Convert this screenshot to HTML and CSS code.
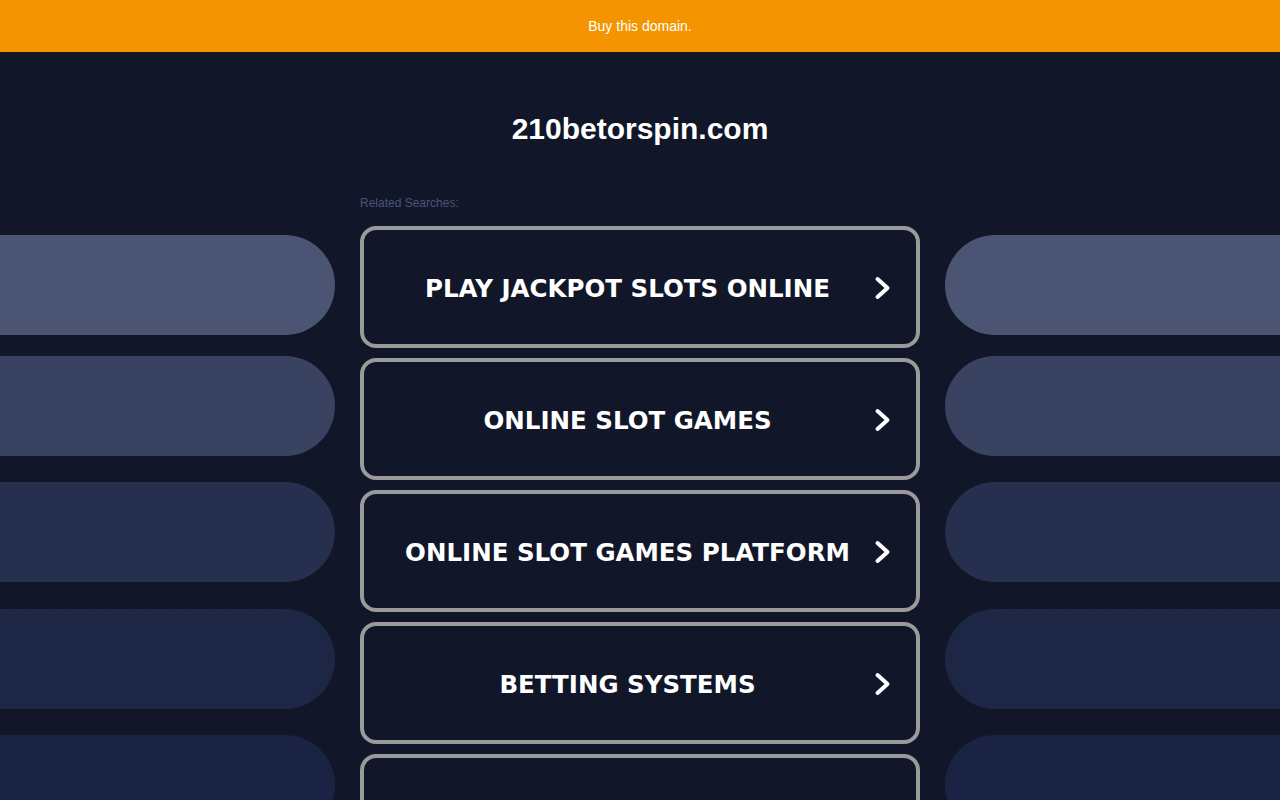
FILE: index.html
```html
<!DOCTYPE html>
<html lang="en">
<head>
<meta charset="utf-8">
<title>210betorspin.com</title>
<link rel="stylesheet" href="styles.css">
</head>
<body>
<div class="topbar"><a class="buy" href="#">Buy this domain.</a></div>
<h1 class="title">210betorspin.com</h1>
<div class="row">
  <div class="side side-left">
    <div class="pill p1"></div>
    <div class="pill p2"></div>
    <div class="pill p3"></div>
    <div class="pill p4"></div>
    <div class="pill p5"></div>
  </div>
  <div class="center">
    <div class="related">Related Searches:</div>
    <a class="btn" href="#"><span class="btn-text">PLAY JACKPOT SLOTS ONLINE</span><svg class="chev" viewBox="0 0 17 25" width="17" height="25"><path d="M3.5 3.5 L13.5 12.5 L3.5 21.5" fill="none" stroke="#fff" stroke-width="4" stroke-linecap="round" stroke-linejoin="round"/></svg></a>
    <a class="btn" href="#"><span class="btn-text">ONLINE SLOT GAMES</span><svg class="chev" viewBox="0 0 17 25" width="17" height="25"><path d="M3.5 3.5 L13.5 12.5 L3.5 21.5" fill="none" stroke="#fff" stroke-width="4" stroke-linecap="round" stroke-linejoin="round"/></svg></a>
    <a class="btn" href="#"><span class="btn-text">ONLINE SLOT GAMES PLATFORM</span><svg class="chev" viewBox="0 0 17 25" width="17" height="25"><path d="M3.5 3.5 L13.5 12.5 L3.5 21.5" fill="none" stroke="#fff" stroke-width="4" stroke-linecap="round" stroke-linejoin="round"/></svg></a>
    <a class="btn" href="#"><span class="btn-text">BETTING SYSTEMS</span><svg class="chev" viewBox="0 0 17 25" width="17" height="25"><path d="M3.5 3.5 L13.5 12.5 L3.5 21.5" fill="none" stroke="#fff" stroke-width="4" stroke-linecap="round" stroke-linejoin="round"/></svg></a>
    <a class="btn" href="#"><span class="btn-text"></span><svg class="chev" viewBox="0 0 17 25" width="17" height="25"><path d="M3.5 3.5 L13.5 12.5 L3.5 21.5" fill="none" stroke="#fff" stroke-width="4" stroke-linecap="round" stroke-linejoin="round"/></svg></a>
  </div>
  <div class="side side-right">
    <div class="pill p1"></div>
    <div class="pill p2"></div>
    <div class="pill p3"></div>
    <div class="pill p4"></div>
    <div class="pill p5"></div>
  </div>
</div>
</body>
</html>
```

FILE: styles.css
```css
html, body {
  margin: 0;
  padding: 0;
  background: #111729;
  overflow: hidden;
}
body {
  font-family: "Liberation Sans", Arial, sans-serif;
  color: #fff;
}
.topbar {
  height: 52px;
  background: #f39400;
  display: flex;
  align-items: center;
  justify-content: center;
}
.buy {
  color: #fff;
  font-size: 14px;
  line-height: 16px;
  text-decoration: none;
}
.title {
  margin: 59px 0 0 0;
  height: 36px;
  line-height: 36px;
  font-size: 30px;
  font-weight: bold;
  text-align: center;
  color: #fff;
}
.row {
  margin-top: 39px;
  display: flex;
  gap: 25px;
}
.side {
  width: 335px;
  flex: none;
  padding-top: 49px;
  display: flex;
  flex-direction: column;
}
.pill {
  height: 100px;
  flex: none;
}
.side-left .pill { border-radius: 0 50px 50px 0; }
.side-right .pill { border-radius: 50px 0 0 50px; }
.p1 { background: #4b5472; }
.p2 { background: #3a4261; margin-top: 21px; }
.p3 { background: #272f4e; margin-top: 26px; }
.p4 {
  background-color: #1e2646;
  background-image: radial-gradient(rgba(90,100,140,0.07) 0.6px, transparent 0.9px);
  background-size: 5px 5px;
  margin-top: 27px;
}
.p5 {
  background-color: #1b2344;
  background-image: radial-gradient(rgba(10,14,30,0.2) 0.7px, transparent 1px);
  background-size: 7px 7px;
  margin-top: 26px;
}
.center {
  width: 560px;
  flex: none;
  display: flex;
  flex-direction: column;
}
.related {
  margin-top: 9px;
  height: 16px;
  line-height: 16px;
  font-size: 12px;
  color: #4a5478;
  margin-bottom: 15px;
}
.btn {
  position: relative;
  box-sizing: border-box;
  height: 122px;
  border: 4px solid #9a9a9a;
  border-radius: 16px;
  margin-bottom: 10px;
  display: flex;
  align-items: center;
  padding-right: 25px;
  text-decoration: none;
  color: #fff;
}
.btn-text {
  flex: 1;
  padding-top: 4px;
  text-align: center;
  font-family: "DejaVu Sans", Verdana, sans-serif;
  font-weight: bold;
  font-size: 24.5px;
  line-height: 30px;
  color: #fff;
}
.chev {
  position: absolute;
  right: 25px;
  top: calc(50% + 1px);
  transform: translateY(-50%);
}
```
